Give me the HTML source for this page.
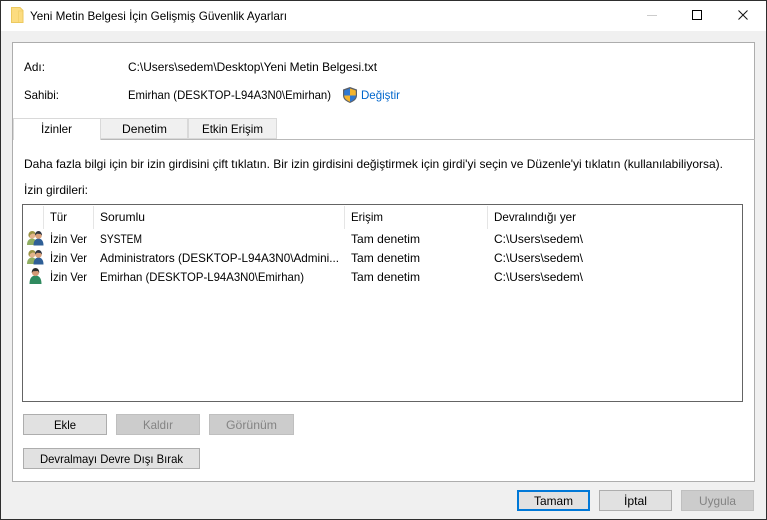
<!DOCTYPE html>
<html><head><meta charset="utf-8"><style>
html,body{margin:0;padding:0;background:#f0f0f0}
svg{display:block}
text{font-family:"Liberation Sans",sans-serif;font-size:12px;fill:#000}
</style></head><body>
<svg width="767" height="520" viewBox="0 0 767 520" xmlns="http://www.w3.org/2000/svg">
<defs>
<g id="two">
<path d="M0 14c0-4 2-6.500 5-6.500S10 10 10 14z" fill="#8fae62"/>
<circle cx="5" cy="4.200" r="3.400" fill="#e2b48c"/>
<path d="M1.500 5c-.5-3 1.500-5 3.700-5S8.500 1.500 8.500 3L5.500 2.500 3 4l-.5 2.500z" fill="#9a9444"/>
<path d="M6.500 14.500c0-4.500 2-7 5-7s5 2.500 5 7z" fill="#2f5f96"/>
<circle cx="11.500" cy="4.500" r="3.300" fill="#d8a07a"/>
<path d="M8 4.500C8 1.500 9.800 0 11.500 0S15 1.500 15 4.500L13.500 3 10 2.800z" fill="#2e3440"/>
</g>
<g id="one">
<path d="M.5 16c0-6 2.500-8.500 6-8.500s6 2.500 6 8.500z" fill="#2f8a5f"/>
<circle cx="6.500" cy="4.500" r="3.600" fill="#d49a76"/>
<path d="M2.800 5C2.500 2 4.300 0 6.500 0s4 2 3.700 5L9 3 4 3.200z" fill="#2a2a2a"/>
</g>
</defs>

<rect x="0" y="0" width="767" height="520" fill="#f0f0f0"/>
<rect x="0.500" y="0.500" width="766" height="519" fill="none" stroke="#2e2e2e"/>
<rect x="1" y="1" width="765" height="30" fill="#fff"/>

<!-- folder icon -->
<path d="M11.500 7.500h8.500l3 3v12h-11.500z" fill="#fcdc80" stroke="#ecc95f"/>
<path d="M18.500 22v-11h4" fill="none" stroke="#f3d26e"/>
<text x="30" y="20" textLength="257" lengthAdjust="spacingAndGlyphs">Yeni Metin Belgesi İçin Gelişmiş Güvenlik Ayarları</text>

<!-- window controls -->
<rect x="647" y="15" width="10" height="1" fill="#ccc"/>
<rect x="692.500" y="10.500" width="9" height="9" fill="none" stroke="#000"/>
<path d="M738.500 10.500l9 9M747.500 10.500l-9 9" stroke="#111" fill="none"/>

<!-- main panel -->
<rect x="12.500" y="42.500" width="742" height="439" fill="#fff" stroke="#adadad"/>

<text x="24" y="71" textLength="21" lengthAdjust="spacingAndGlyphs">Adı:</text>
<text x="128" y="71" textLength="249" lengthAdjust="spacingAndGlyphs">C:\Users\sedem\Desktop\Yeni Metin Belgesi.txt</text>
<text x="24" y="99" textLength="35" lengthAdjust="spacingAndGlyphs">Sahibi:</text>
<text x="128" y="99" textLength="203" lengthAdjust="spacingAndGlyphs">Emirhan (DESKTOP-L94A3N0\Emirhan)</text>

<!-- shield -->
<path d="M350 87l7 2.500v6c0 4-3.500 6-7 7.500-3.500-1.500-7-3.500-7-7.500v-6z" fill="#5b6068"/>
<path d="M350 88.500v7h-5.800v-5z" fill="#2f78d2"/>
<path d="M350 88.500l5.800 2v5H350z" fill="#f5b52e"/>
<path d="M344.200 95.500H350v6.300c-2.800-1.200-5.800-3-5.800-6.300z" fill="#f5b52e"/>
<path d="M350 95.500h5.800c0 3.300-3 5.100-5.800 6.300z" fill="#2f78d2"/>
<text x="361" y="99" textLength="39" lengthAdjust="spacingAndGlyphs" style="fill:#0066cc">Değiştir</text>

<!-- tabs -->
<path d="M13 139.500H755" stroke="#b9b9b9"/>
<rect x="100.500" y="118.500" width="87" height="20" fill="#f0f0f0" stroke="#d9d9d9"/>
<rect x="188.500" y="118.500" width="88" height="20" fill="#f0f0f0" stroke="#d9d9d9"/>
<path d="M13.500 140V118.500H100.500V140" fill="#fff" stroke="#d9d9d9"/>
<rect x="14" y="138" width="86" height="3" fill="#fff"/>
<text x="41" y="133" textLength="31" lengthAdjust="spacingAndGlyphs">İzinler</text>
<text x="122" y="133" textLength="45" lengthAdjust="spacingAndGlyphs">Denetim</text>
<text x="202" y="133" textLength="61" lengthAdjust="spacingAndGlyphs">Etkin Erişim</text>

<text x="24" y="168" textLength="699" lengthAdjust="spacingAndGlyphs">Daha fazla bilgi için bir izin girdisini çift tıklatın. Bir izin girdisini değiştirmek için girdi'yi seçin ve Düzenle'yi tıklatın (kullanılabiliyorsa).</text>
<text x="24" y="194" textLength="64" lengthAdjust="spacingAndGlyphs">İzin girdileri:</text>

<!-- list -->
<rect x="22.500" y="204.500" width="720" height="197" fill="#fff" stroke="#646464"/>
<path d="M43.500 206v23M93.500 206v23M344.500 206v23M487.500 206v23" stroke="#e5e5e5"/>
<text x="50" y="221" textLength="17" lengthAdjust="spacingAndGlyphs">Tür</text>
<text x="100" y="221" textLength="45" lengthAdjust="spacingAndGlyphs">Sorumlu</text>
<text x="351" y="221" textLength="32" lengthAdjust="spacingAndGlyphs">Erişim</text>
<text x="494" y="221" textLength="82" lengthAdjust="spacingAndGlyphs">Devralındığı yer</text>

<use href="#two" x="27" y="231"/>
<use href="#two" x="27" y="250"/>
<use href="#one" x="29" y="268"/>

<text x="50" y="243" textLength="37" lengthAdjust="spacingAndGlyphs">İzin Ver</text>
<text x="100" y="243" textLength="42" lengthAdjust="spacingAndGlyphs">SYSTEM</text>
<text x="351" y="243" textLength="69" lengthAdjust="spacingAndGlyphs">Tam denetim</text>
<text x="494" y="243" textLength="89" lengthAdjust="spacingAndGlyphs">C:\Users\sedem\</text>

<text x="50" y="262" textLength="37" lengthAdjust="spacingAndGlyphs">İzin Ver</text>
<text x="100" y="262" textLength="239" lengthAdjust="spacingAndGlyphs">Administrators (DESKTOP-L94A3N0\Admini...</text>
<text x="351" y="262" textLength="69" lengthAdjust="spacingAndGlyphs">Tam denetim</text>
<text x="494" y="262" textLength="89" lengthAdjust="spacingAndGlyphs">C:\Users\sedem\</text>

<text x="50" y="281" textLength="37" lengthAdjust="spacingAndGlyphs">İzin Ver</text>
<text x="100" y="281" textLength="204" lengthAdjust="spacingAndGlyphs">Emirhan (DESKTOP-L94A3N0\Emirhan)</text>
<text x="351" y="281" textLength="69" lengthAdjust="spacingAndGlyphs">Tam denetim</text>
<text x="494" y="281" textLength="89" lengthAdjust="spacingAndGlyphs">C:\Users\sedem\</text>

<!-- buttons -->
<rect x="23.500" y="414.500" width="83" height="20" fill="#e1e1e1" stroke="#adadad"/>
<text x="54" y="429" textLength="22" lengthAdjust="spacingAndGlyphs">Ekle</text>
<rect x="116.500" y="414.500" width="83" height="20" fill="#ccc" stroke="#bfbfbf"/>
<text x="143" y="429" textLength="30" lengthAdjust="spacingAndGlyphs" style="fill:#838383">Kaldır</text>
<rect x="209.500" y="414.500" width="84" height="20" fill="#ccc" stroke="#bfbfbf"/>
<text x="226" y="429" textLength="51" lengthAdjust="spacingAndGlyphs" style="fill:#838383">Görünüm</text>
<rect x="23.500" y="448.500" width="176" height="20" fill="#e1e1e1" stroke="#adadad"/>
<text x="40" y="463" textLength="143" lengthAdjust="spacingAndGlyphs">Devralmayı Devre Dışı Bırak</text>

<rect x="518" y="491" width="71" height="19" fill="#e1e1e1" stroke="#0078d7" stroke-width="2"/>
<text x="534" y="505" textLength="39" lengthAdjust="spacingAndGlyphs">Tamam</text>
<rect x="599.500" y="490.500" width="72" height="20" fill="#e1e1e1" stroke="#adadad"/>
<text x="624" y="505" textLength="23" lengthAdjust="spacingAndGlyphs">İptal</text>
<rect x="681.500" y="490.500" width="72" height="20" fill="#ccc" stroke="#bfbfbf"/>
<text x="699" y="505" textLength="37" lengthAdjust="spacingAndGlyphs" style="fill:#838383">Uygula</text>
</svg>
</body></html>
